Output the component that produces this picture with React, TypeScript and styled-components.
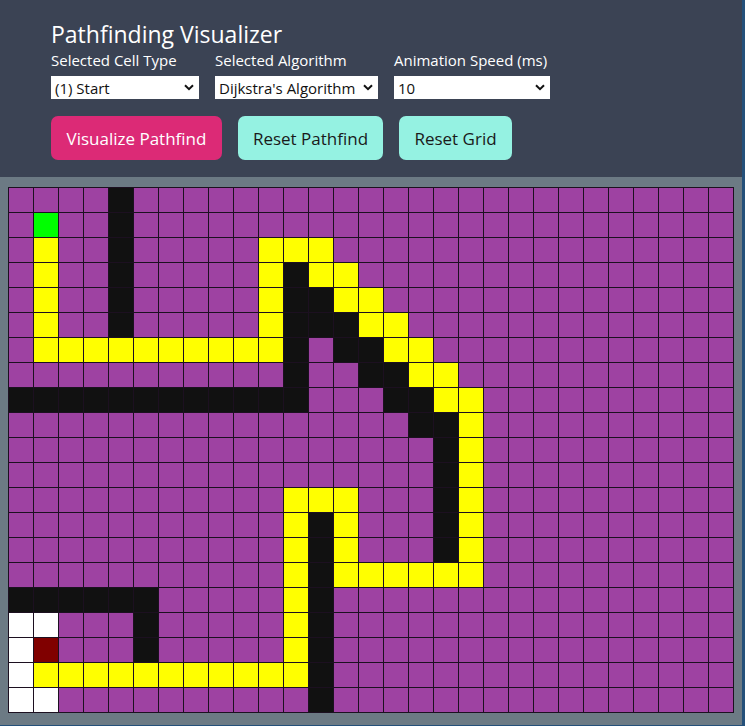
import React from "react";
import styled, { createGlobalStyle } from "styled-components";

const GlobalStyle = createGlobalStyle`
  html, body { margin: 0; padding: 0; }
  body {
    background: #24507a;
    font-family: "Segoe UI", "Open Sans", "Noto Sans", sans-serif;
  }
`;

const Page = styled.div`
  width: 742px;
  display: flex;
  flex-direction: column;
`;

const Header = styled.header`
  background: #3b4354;
  height: 177px;
  box-sizing: border-box;
  padding: 19px 0 0 51px;
  color: #ffffff;
  display: flex;
  flex-direction: column;
`;

const Title = styled.h1`
  margin: 0;
  font-size: 23px;
  font-weight: 400;
  line-height: 31px;
`;

const Controls = styled.div`
  display: flex;
  gap: 16px;
`;

const Field = styled.label`
  display: flex;
  flex-direction: column;
  font-size: 15px;
  line-height: 20px;
  gap: 6px;
`;

const SelectWrap = styled.div<{ $w: number }>`
  position: relative;
  width: ${(p) => p.$w}px;
  height: 23px;
`;

const Select = styled.select`
  appearance: none;
  -webkit-appearance: none;
  width: 100%;
  height: 100%;
  border: none;
  border-radius: 0;
  background: #ffffff;
  color: #111;
  font-family: inherit;
  font-size: 15px;
  padding: 0 0 0 4px;
  outline: none;
`;

const Chevron = styled.svg`
  position: absolute;
  right: 5px;
  top: 8px;
  width: 10px;
  height: 7px;
  pointer-events: none;
`;

const Buttons = styled.div`
  display: flex;
  gap: 16px;
  margin-top: 17px;
`;

const Button = styled.button<{ $primary?: boolean; $w: number }>`
  width: ${(p) => p.$w}px;
  height: 44px;
  border: none;
  border-radius: 7px;
  background: ${(p) => (p.$primary ? "#dc2a76" : "#95f2e2")};
  color: ${(p) => (p.$primary ? "#ffffff" : "#1a1a1a")};
  font-family: inherit;
  font-size: 17px;
  padding: 0;
  cursor: pointer;
`;

const GridArea = styled.main`
  background: #6c7a84;
  padding: 10px 8px 12px 8px;
`;

const Grid = styled.div`
  display: grid;
  grid-template-columns: repeat(29, 24px);
  grid-auto-rows: 24px;
  gap: 1px;
  padding: 1px;
  background: #1c1020;
  width: max-content;
`;

type Kind = "e" | "w" | "p" | "s" | "t" | "v";

const colors: Record<Kind, string> = {
  e: "#9e42a2",
  w: "#111111",
  p: "#ffff00",
  s: "#00ff00",
  t: "#800000",
  v: "#ffffff",
};

const Cell = styled.div<{ $k: Kind }>`
  background: ${(p) => colors[p.$k]};
`;

const COLS = 29;
const ROWS = 21;

function buildGrid(): Kind[][] {
  const g: Kind[][] = Array.from({ length: ROWS }, () =>
    Array.from({ length: COLS }, () => "e" as Kind)
  );
  const set = (r: number, c: number, k: Kind) => {
    g[r][c] = k;
  };
  // walls
  for (let r = 0; r <= 5; r++) set(r, 4, "w");
  for (let r = 3; r <= 8; r++) set(r, 11, "w");
  for (let c = 0; c <= 11; c++) set(8, c, "w");
  set(4, 12, "w");
  set(5, 12, "w");
  set(5, 13, "w");
  set(6, 13, "w");
  set(6, 14, "w");
  set(7, 14, "w");
  set(7, 15, "w");
  set(8, 15, "w");
  set(8, 16, "w");
  set(9, 16, "w");
  for (let r = 9; r <= 14; r++) set(r, 17, "w");
  for (let r = 13; r <= 20; r++) set(r, 12, "w");
  for (let c = 0; c <= 5; c++) set(16, c, "w");
  set(17, 5, "w");
  set(18, 5, "w");
  // visited white
  set(17, 0, "v");
  set(17, 1, "v");
  set(18, 0, "v");
  set(19, 0, "v");
  set(20, 0, "v");
  set(20, 1, "v");
  // path
  for (let r = 2; r <= 6; r++) set(r, 1, "p");
  for (let c = 1; c <= 10; c++) set(6, c, "p");
  for (let r = 2; r <= 6; r++) set(r, 10, "p");
  set(2, 11, "p");
  set(2, 12, "p");
  set(3, 12, "p");
  set(3, 13, "p");
  set(4, 13, "p");
  set(4, 14, "p");
  set(5, 14, "p");
  set(5, 15, "p");
  set(6, 15, "p");
  set(6, 16, "p");
  set(7, 16, "p");
  set(7, 17, "p");
  set(8, 17, "p");
  for (let r = 8; r <= 15; r++) set(r, 18, "p");
  for (let c = 13; c <= 18; c++) set(15, c, "p");
  for (let r = 12; r <= 15; r++) set(r, 13, "p");
  set(12, 12, "p");
  for (let r = 12; r <= 19; r++) set(r, 11, "p");
  for (let c = 1; c <= 11; c++) set(19, c, "p");
  // start / target
  set(1, 1, "s");
  set(18, 1, "t");
  return g;
}

const grid = buildGrid();

const ChevronIcon = () => (
  <Chevron viewBox="0 0 10 7">
    <path d="M1 1.2 L5 5.2 L9 1.2" fill="none" stroke="#111" strokeWidth="2" />
  </Chevron>
);

export default function App() {
  return (
    <>
      <GlobalStyle />
      <Page>
        <Header>
          <Title>Pathfinding Visualizer</Title>
          <Controls>
            <Field>
              Selected Cell Type
              <SelectWrap $w={148}>
                <Select defaultValue="start">
                  <option value="start">(1) Start</option>
                  <option value="end">(2) End</option>
                  <option value="wall">(3) Wall</option>
                </Select>
                <ChevronIcon />
              </SelectWrap>
            </Field>
            <Field>
              Selected Algorithm
              <SelectWrap $w={163}>
                <Select defaultValue="dijkstra">
                  <option value="dijkstra">Dijkstra's Algorithm</option>
                  <option value="astar">A* Search</option>
                </Select>
                <ChevronIcon />
              </SelectWrap>
            </Field>
            <Field>
              Animation Speed (ms)
              <SelectWrap $w={156}>
                <Select defaultValue="10">
                  <option value="10">10</option>
                  <option value="50">50</option>
                  <option value="100">100</option>
                </Select>
                <ChevronIcon />
              </SelectWrap>
            </Field>
          </Controls>
          <Buttons>
            <Button $primary $w={171}>Visualize Pathfind</Button>
            <Button $w={145}>Reset Pathfind</Button>
            <Button $w={113}>Reset Grid</Button>
          </Buttons>
        </Header>
        <GridArea>
          <Grid>
            {grid.flatMap((row, r) =>
              row.map((k, c) => <Cell key={`${r}-${c}`} $k={k} />)
            )}
          </Grid>
        </GridArea>
      </Page>
    </>
  );
}
